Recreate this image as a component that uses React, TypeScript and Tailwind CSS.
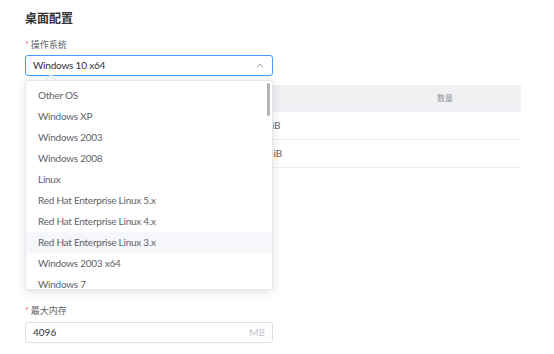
import React from 'react';

const options = [
  'Other OS',
  'Windows XP',
  'Windows 2003',
  'Windows 2008',
  'Linux',
  'Red Hat Enterprise Linux 5.x',
  'Red Hat Enterprise Linux 4.x',
  'Red Hat Enterprise Linux 3.x',
  'Windows 2003 x64',
  'Windows 7',
];

const font = { fontFamily: 'Lato, "Noto Sans CJK SC", sans-serif' };

export default function App() {
  return (
    <div className="w-[554px] h-[354px] bg-white overflow-hidden pl-[25px] pt-[12px] text-[#606266]" style={font}>
      {/* Section title */}
      <div className="text-[12px] font-bold text-[#303133] leading-[14px]">桌面配置</div>

      {/* OS field */}
      <div className="mt-[13px] flex items-center text-[9px] leading-[12px] text-[#606266]">
        <span className="text-[#f56c6c] mr-[2px]">*</span>
        <span>操作系统</span>
      </div>

      <div className="relative mt-[4px] w-[248px]">
        <div className="h-[21px] border border-[#409eff] rounded-[3px] flex items-center justify-between pl-[7px] pr-[8px] bg-white">
          <span className="text-[10px] tracking-[-0.2px] text-[#303133]">Windows 10 x64</span>
          <svg width="8" height="5" viewBox="0 0 8 5" fill="none">
            <path d="M1 4.2 L4 1.2 L7 4.2" stroke="#909399" strokeWidth="1" />
          </svg>
        </div>

        {/* Dropdown popper */}
        <div className="absolute left-0 top-[25px] w-[248px] h-[210px] z-10">
          <div className="absolute left-[22px] -top-[4px] w-[8px] h-[8px] bg-white border-l border-t border-[#e4e7ed] rotate-45" />
          <div className="relative h-full bg-white border border-[#e4e7ed] rounded-[3px] shadow-[0_2px_10px_rgba(0,0,0,0.12)] overflow-hidden">
            <div className="pt-[4px]">
              {options.map((o) => (
                <div
                  key={o}
                  className={
                    'h-[21px] flex items-center pl-[12px] text-[10px] tracking-[-0.25px] text-[#606266] ' +
                    (o === 'Red Hat Enterprise Linux 3.x' ? 'bg-[#f5f7fa]' : '')
                  }
                >
                  {o}
                </div>
              ))}
            </div>
            <div className="absolute right-[2px] top-[2px] w-[3px] h-[33px] rounded-full bg-[#b4b4b4]" />
          </div>
        </div>
      </div>

      {/* Table behind dropdown */}
      <div className="mt-[9px] w-[496px] text-[10px]">
        <div className="h-[27px] bg-[#f0f1f3] border-b border-[#ebeef5] flex items-center">
          <div className="w-[326px]" />
          <div className="flex-1 pl-[86px] text-[8px] text-[#909399]">数量</div>
        </div>
        <div className="h-[28px] border-b border-[#ebeef5] flex items-center pl-[231px] text-[#606266]">4 GiB</div>
        <div className="h-[28px] border-b border-[#ebeef5] flex items-center pl-[227px] text-[#606266]">16 GiB</div>
      </div>

      {/* Max memory field */}
      <div className="mt-[137px] flex items-center text-[9px] leading-[12px]">
        <span className="text-[#f56c6c] mr-[2px]">*</span>
        <span>最大内存</span>
      </div>
      <div className="mt-[5px] w-[248px] h-[21px] border border-[#dcdfe6] rounded-[3px] flex items-center justify-between pl-[7px] pr-[7px]">
        <span className="text-[10px] text-[#303133]">4096</span>
        <span className="text-[10px] text-[#c0c4cc]">MB</span>
      </div>
    </div>
  );
}
